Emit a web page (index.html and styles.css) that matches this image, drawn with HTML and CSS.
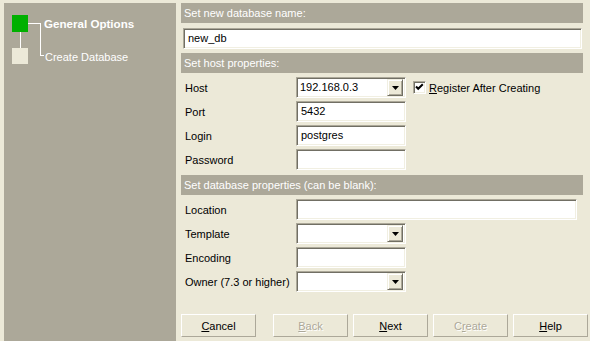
FILE: index.html
```html
<!DOCTYPE html>
<html>
<head>
<meta charset="utf-8">
<title>Create Database</title>
<link rel="stylesheet" href="styles.css">
</head>
<body>
<div class="dialog">
  <aside class="sidebar">
    <svg class="tree" width="40" height="66" viewBox="0 0 40 66">
      <rect x="8" y="12" width="16" height="17" fill="#00b000"/>
      <rect x="8" y="45" width="16" height="16" fill="#ece9d8"/>
      <line x1="16.5" y1="29" x2="16.5" y2="45" stroke="#fff" stroke-width="1"/>
      <line x1="24" y1="20.5" x2="36" y2="20.5" stroke="#fff" stroke-width="1"/>
      <line x1="36.5" y1="20" x2="36.5" y2="53" stroke="#fff" stroke-width="1"/>
      <line x1="36" y1="52.5" x2="40" y2="52.5" stroke="#fff" stroke-width="1"/>
    </svg>
    <div class="steps">
      <div class="step current">General Options</div>
      <div class="step">Create Database</div>
    </div>
  </aside>
  <main class="main">
    <div class="bar">Set new database name:</div>
    <div class="field name">new_db</div>
    <div class="bar">Set host properties:</div>
    <div class="rows">
      <div class="row">
        <span class="label">Host</span>
        <div class="combo"><span class="value">192.168.0.3</span><span class="drop"><svg width="7" height="4" viewBox="0 0 7 4"><polygon points="0,0 7,0 3.5,4" fill="#000"/></svg></span></div>
        <span class="check"><svg width="11" height="11" viewBox="0 0 11 11"><path d="M2 4.5 L4.2 6.8 L8.8 2.2" fill="none" stroke="#000" stroke-width="2"/></svg></span>
        <span class="check-label"><u>R</u>egister After Creating</span>
      </div>
      <div class="row">
        <span class="label">Port</span>
        <div class="field short">5432</div>
      </div>
      <div class="row">
        <span class="label">Login</span>
        <div class="field short">postgres</div>
      </div>
      <div class="row">
        <span class="label">Password</span>
        <div class="field short"></div>
      </div>
    </div>
    <div class="bar">Set database properties (can be blank):</div>
    <div class="rows rows-last">
      <div class="row">
        <span class="label">Location</span>
        <div class="field long"></div>
      </div>
      <div class="row">
        <span class="label">Template</span>
        <div class="combo"><span class="value"></span><span class="drop"><svg width="7" height="4" viewBox="0 0 7 4"><polygon points="0,0 7,0 3.5,4" fill="#000"/></svg></span></div>
      </div>
      <div class="row">
        <span class="label">Encoding</span>
        <div class="field short"></div>
      </div>
      <div class="row">
        <span class="label">Owner (7.3 or higher)</span>
        <div class="combo"><span class="value"></span><span class="drop"><svg width="7" height="4" viewBox="0 0 7 4"><polygon points="0,0 7,0 3.5,4" fill="#000"/></svg></span></div>
      </div>
    </div>
    <div class="buttons">
      <button class="btn cancel"><u>C</u>ancel</button>
      <button class="btn" disabled><u>B</u>ack</button>
      <button class="btn"><u>N</u>ext</button>
      <button class="btn" disabled>C<u>r</u>eate</button>
      <button class="btn"><u>H</u>elp</button>
    </div>
  </main>
</div>
</body>
</html>
```
FILE: styles.css
```css
html, body {
  margin: 0;
  background: #ece9d8;
  font: 11px "Liberation Sans", Arial, sans-serif;
  color: #000;
  overflow: hidden;
}

.dialog {
  display: flex;
  gap: 5px;
  padding: 3px 0 0 4px;
  height: 338px;
}

.sidebar {
  width: 172px;
  flex: none;
  background: #aca899;
  color: #fff;
  display: flex;
  align-items: flex-start;
}

.tree {
  flex: none;
  display: block;
}

.steps {
  display: flex;
  flex-direction: column;
  gap: 19px;
  padding-top: 14px;
  padding-left: 1px;
}

.step {
  line-height: 14px;
  white-space: nowrap;
}

.step.current {
  font-weight: bold;
  font-size: 11.6px;
  margin-left: -1px;
}

.main {
  width: 407px;
  display: flex;
  flex-direction: column;
}

.bar {
  box-sizing: border-box;
  width: 402px;
  height: 20px;
  line-height: 20px;
  padding-left: 3px;
  background: #aca899;
  color: #fff;
}

.field {
  box-sizing: border-box;
  height: 21px;
  line-height: 19px;
  padding-left: 4px;
  background: #fff;
  border: 1px solid;
  border-color: #aca899 #fff #fff #aca899;
  box-shadow: inset 1px 1px 0 #716f64, inset -1px -1px 0 #f1efe2;
  white-space: nowrap;
}

.field.name {
  width: 399px;
  margin: 5px 0 4px 2px;
}

.field.short {
  width: 110px;
}

.field.long {
  width: 281px;
}

.rows {
  display: flex;
  flex-direction: column;
  gap: 3px;
  padding: 4px 0 5px 4px;
}

.rows.rows-last {
  padding-bottom: 0;
}

.row {
  display: flex;
  align-items: center;
  height: 21px;
}

.label {
  width: 111px;
  flex: none;
  white-space: nowrap;
}

.combo {
  box-sizing: border-box;
  width: 110px;
  height: 21px;
  display: flex;
  align-items: center;
  padding: 1px 2px 1px 1px;
  background: #fff;
  border: 1px solid;
  border-color: #aca899 #fff #fff #aca899;
  box-shadow: inset 1px 1px 0 #716f64, inset -1px -1px 0 #f1efe2;
}

.combo .value {
  flex: 1;
  padding-left: 2px;
  line-height: 17px;
  white-space: nowrap;
}

.drop {
  box-sizing: border-box;
  width: 16px;
  height: 17px;
  display: flex;
  align-items: center;
  justify-content: center;
  background: #ece9d8;
  border: 1px solid;
  border-color: #f1efe2 #716f64 #716f64 #f1efe2;
  box-shadow: inset 1px 1px 0 #fff, inset -1px -1px 0 #aca899;
}

.drop svg {
  display: block;
}

.check {
  box-sizing: border-box;
  width: 13px;
  height: 13px;
  margin-left: 7px;
  background: #fff;
  border: 1px solid;
  border-color: #aca899 #fff #fff #aca899;
  box-shadow: inset 1px 1px 0 #716f64, inset -1px -1px 0 #f1efe2;
  display: flex;
  align-items: center;
  justify-content: center;
}

.check svg {
  display: block;
}

.check-label {
  margin-left: 3px;
  white-space: nowrap;
}

.buttons {
  display: flex;
  gap: 5px;
  margin-top: 22px;
}

.btn {
  box-sizing: border-box;
  width: 75px;
  height: 23px;
  padding: 0;
  margin: 0;
  background: #ece9d8;
  font: 11px "Liberation Sans", Arial, sans-serif;
  color: #000;
  border: 1px solid;
  border-color: #fff #aca899 #aca899 #fff;
  box-shadow: inset -1px -1px 0 #ece9d8;
}

.btn.cancel {
  margin-right: 12px;
}

.btn:disabled {
  color: #aca899;
  text-shadow: 1px 1px 0 #fff;
}
```
